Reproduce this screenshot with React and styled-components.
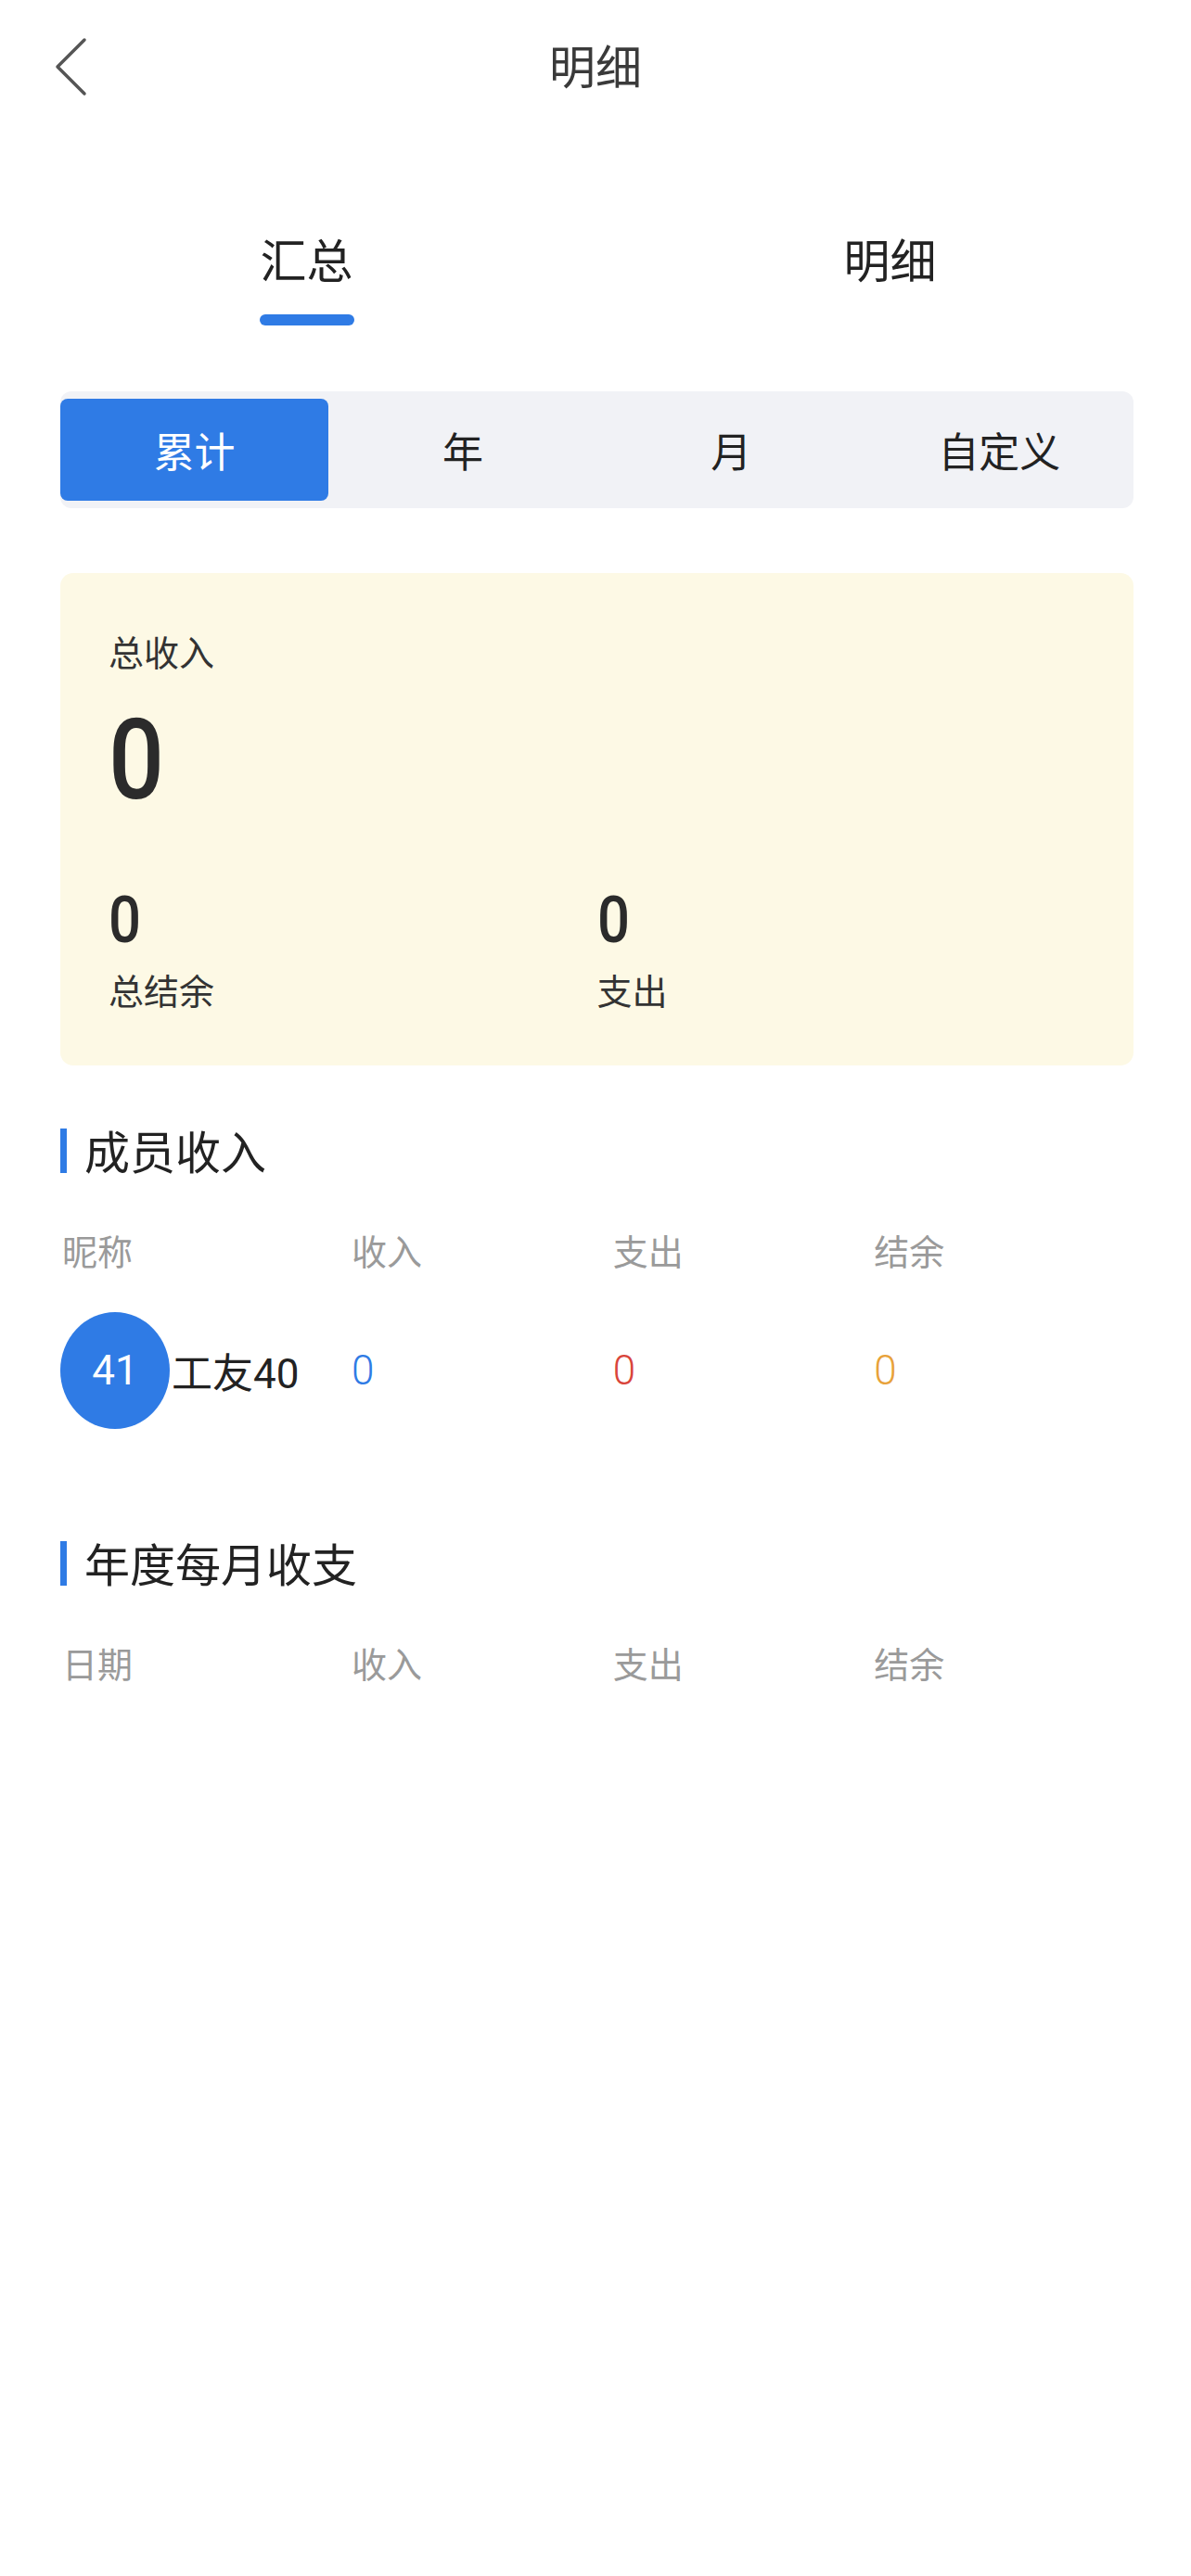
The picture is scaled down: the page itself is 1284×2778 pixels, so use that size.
import React from "react"
import styled, { createGlobalStyle } from "styled-components"

const GlobalStyle = createGlobalStyle`
    body {
        margin: 0;
        background: #ffffff;
        font-family: Roboto, "Noto Sans CJK SC", sans-serif;
        color: #222222;
    }
`

const Page = styled.div`
    width: 1284px;
    min-height: 2778px;
    background: #ffffff;
`
const NavBar = styled.header`
    height: 148px;
    display: grid;
    grid-template-columns: 1fr auto 1fr;
    align-items: center;
`
const BackButton = styled.button`
    justify-self: start;
    margin-left: 58px;
    margin-top: -4px;
    padding: 0;
    border: none;
    background: none;
    display: flex;
`
const NavTitle = styled.h1`
    margin: 0;
    font-size: 50px;
    line-height: 60px;
    font-weight: 400;
    color: #3a3a3a;
`

const Tabs = styled.nav`
    display: flex;
    padding: 105px 10px 0 16px;
`
const Tab = styled.div`
    flex: 1;
    display: flex;
    flex-direction: column;
    align-items: center;
`
const TabLabel = styled.span`
    font-size: 50px;
    line-height: 60px;
    color: #222;
`
const TabLine = styled.span`
    margin-top: 26px;
    width: 102px;
    height: 12px;
    border-radius: 6px;
    background: ${({ $active }) => ($active ? "#2f7be5" : "transparent")};
`

const Content = styled.main`
    padding: 0 62px 0 65px;
`
const Segments = styled.div`
    margin-top: 71px;
    height: 126px;
    box-sizing: border-box;
    padding: 8px 0;
    background: #f1f2f6;
    border-radius: 12px;
    display: grid;
    grid-template-columns: repeat(4, 1fr);
`
const Segment = styled.div`
    display: flex;
    align-items: center;
    justify-content: center;
    font-size: 44px;
    border-radius: 8px;
    color: ${({ $active }) => ($active ? "#ffffff" : "#222222")};
    background: ${({ $active }) => ($active ? "#2f7be5" : "transparent")};
`

const SummaryCard = styled.section`
    margin-top: 70px;
    padding: 63px 52px 55px;
    background: #fdf9e5;
    border-radius: 14px;
`
const CardLabel = styled.div`
    font-size: 38px;
    line-height: 48px;
    color: #333;
`
const BigValue = styled.div`
    margin-top: 31px;
    font-size: 120px;
    line-height: 120px;
    font-weight: 500;
    color: #2b2b2b;
    transform: scaleX(0.88);
    transform-origin: left center;
`
const StatsRow = styled.div`
    margin-top: 72px;
    display: grid;
    grid-template-columns: 1fr 1fr;
`
const Stat = styled.div`
    display: flex;
    flex-direction: column;
    gap: 14px;
`
const StatValue = styled.div`
    font-size: 70px;
    line-height: 80px;
    font-weight: 500;
    color: #2b2b2b;
    transform: scaleX(0.88);
    transform-origin: left center;
`

const SectionTitle = styled.h2`
    margin: ${({ $top }) => $top}px 0 0;
    display: flex;
    align-items: flex-start;
    gap: 19px;
    font-size: 49px;
    line-height: 58px;
    font-weight: 400;
    color: #222;
    &::before {
        content: "";
        width: 7px;
        height: 48px;
        margin-top: 1px;
        background: #2f7be5;
        flex-shrink: 0;
    }
`
const TableRow = styled.div`
    margin-top: ${({ $top }) => $top}px;
    display: grid;
    grid-template-columns: 312px repeat(3, 1fr);
    align-items: center;
`
const HeadCell = styled.div`
    font-size: 38px;
    line-height: 48px;
    color: #9a9a9a;
    padding-left: 2px;
`
const Member = styled.div`
    display: flex;
    align-items: center;
    gap: 2px;
`
const Avatar = styled.div`
    width: 118px;
    height: 126px;
    border-radius: 50%;
    background: #2f7be5;
    color: #ffffff;
    font-size: 44px;
    display: flex;
    align-items: center;
    justify-content: center;
`
const MemberName = styled.span`
    font-size: 44px;
    color: #222;
`
const Amount = styled.div`
    font-size: 44px;
    font-weight: 300;
    padding-left: 2px;
    color: ${({ $color }) => $color};
`

const ChevronLeft = () => (
    <svg width="36" height="64" viewBox="0 0 36 64" fill="none">
        <path d="M33 3 L4 32 L33 61" stroke="#555" strokeWidth="3.5" strokeLinecap="round" strokeLinejoin="round" />
    </svg>
)

const segments = ["累计", "年", "月", "自定义"]
const columns = ["收入", "支出", "结余"]

const App = () => (
    <Page>
        <GlobalStyle />
        <NavBar>
            <BackButton aria-label="返回">
                <ChevronLeft />
            </BackButton>
            <NavTitle>明细</NavTitle>
        </NavBar>
        <Tabs>
            <Tab>
                <TabLabel>汇总</TabLabel>
                <TabLine $active />
            </Tab>
            <Tab>
                <TabLabel>明细</TabLabel>
                <TabLine />
            </Tab>
        </Tabs>
        <Content>
            <Segments>
                {segments.map((s, i) => (
                    <Segment key={s} $active={i === 0}>{s}</Segment>
                ))}
            </Segments>
            <SummaryCard>
                <CardLabel>总收入</CardLabel>
                <BigValue>0</BigValue>
                <StatsRow>
                    <Stat>
                        <StatValue>0</StatValue>
                        <CardLabel>总结余</CardLabel>
                    </Stat>
                    <Stat>
                        <StatValue>0</StatValue>
                        <CardLabel>支出</CardLabel>
                    </Stat>
                </StatsRow>
            </SummaryCard>

            <SectionTitle $top={67}>成员收入</SectionTitle>
            <TableRow $top={53}>
                <HeadCell>昵称</HeadCell>
                {columns.map((c) => <HeadCell key={c}>{c}</HeadCell>)}
            </TableRow>
            <TableRow $top={40}>
                <Member>
                    <Avatar>41</Avatar>
                    <MemberName>工友40</MemberName>
                </Member>
                <Amount $color="#2f7be5">0</Amount>
                <Amount $color="#d9453b">0</Amount>
                <Amount $color="#e8a23a">0</Amount>
            </TableRow>

            <SectionTitle $top={120}>年度每月收支</SectionTitle>
            <TableRow $top={53}>
                <HeadCell>日期</HeadCell>
                {columns.map((c) => <HeadCell key={c}>{c}</HeadCell>)}
            </TableRow>
        </Content>
    </Page>
)

export default App
